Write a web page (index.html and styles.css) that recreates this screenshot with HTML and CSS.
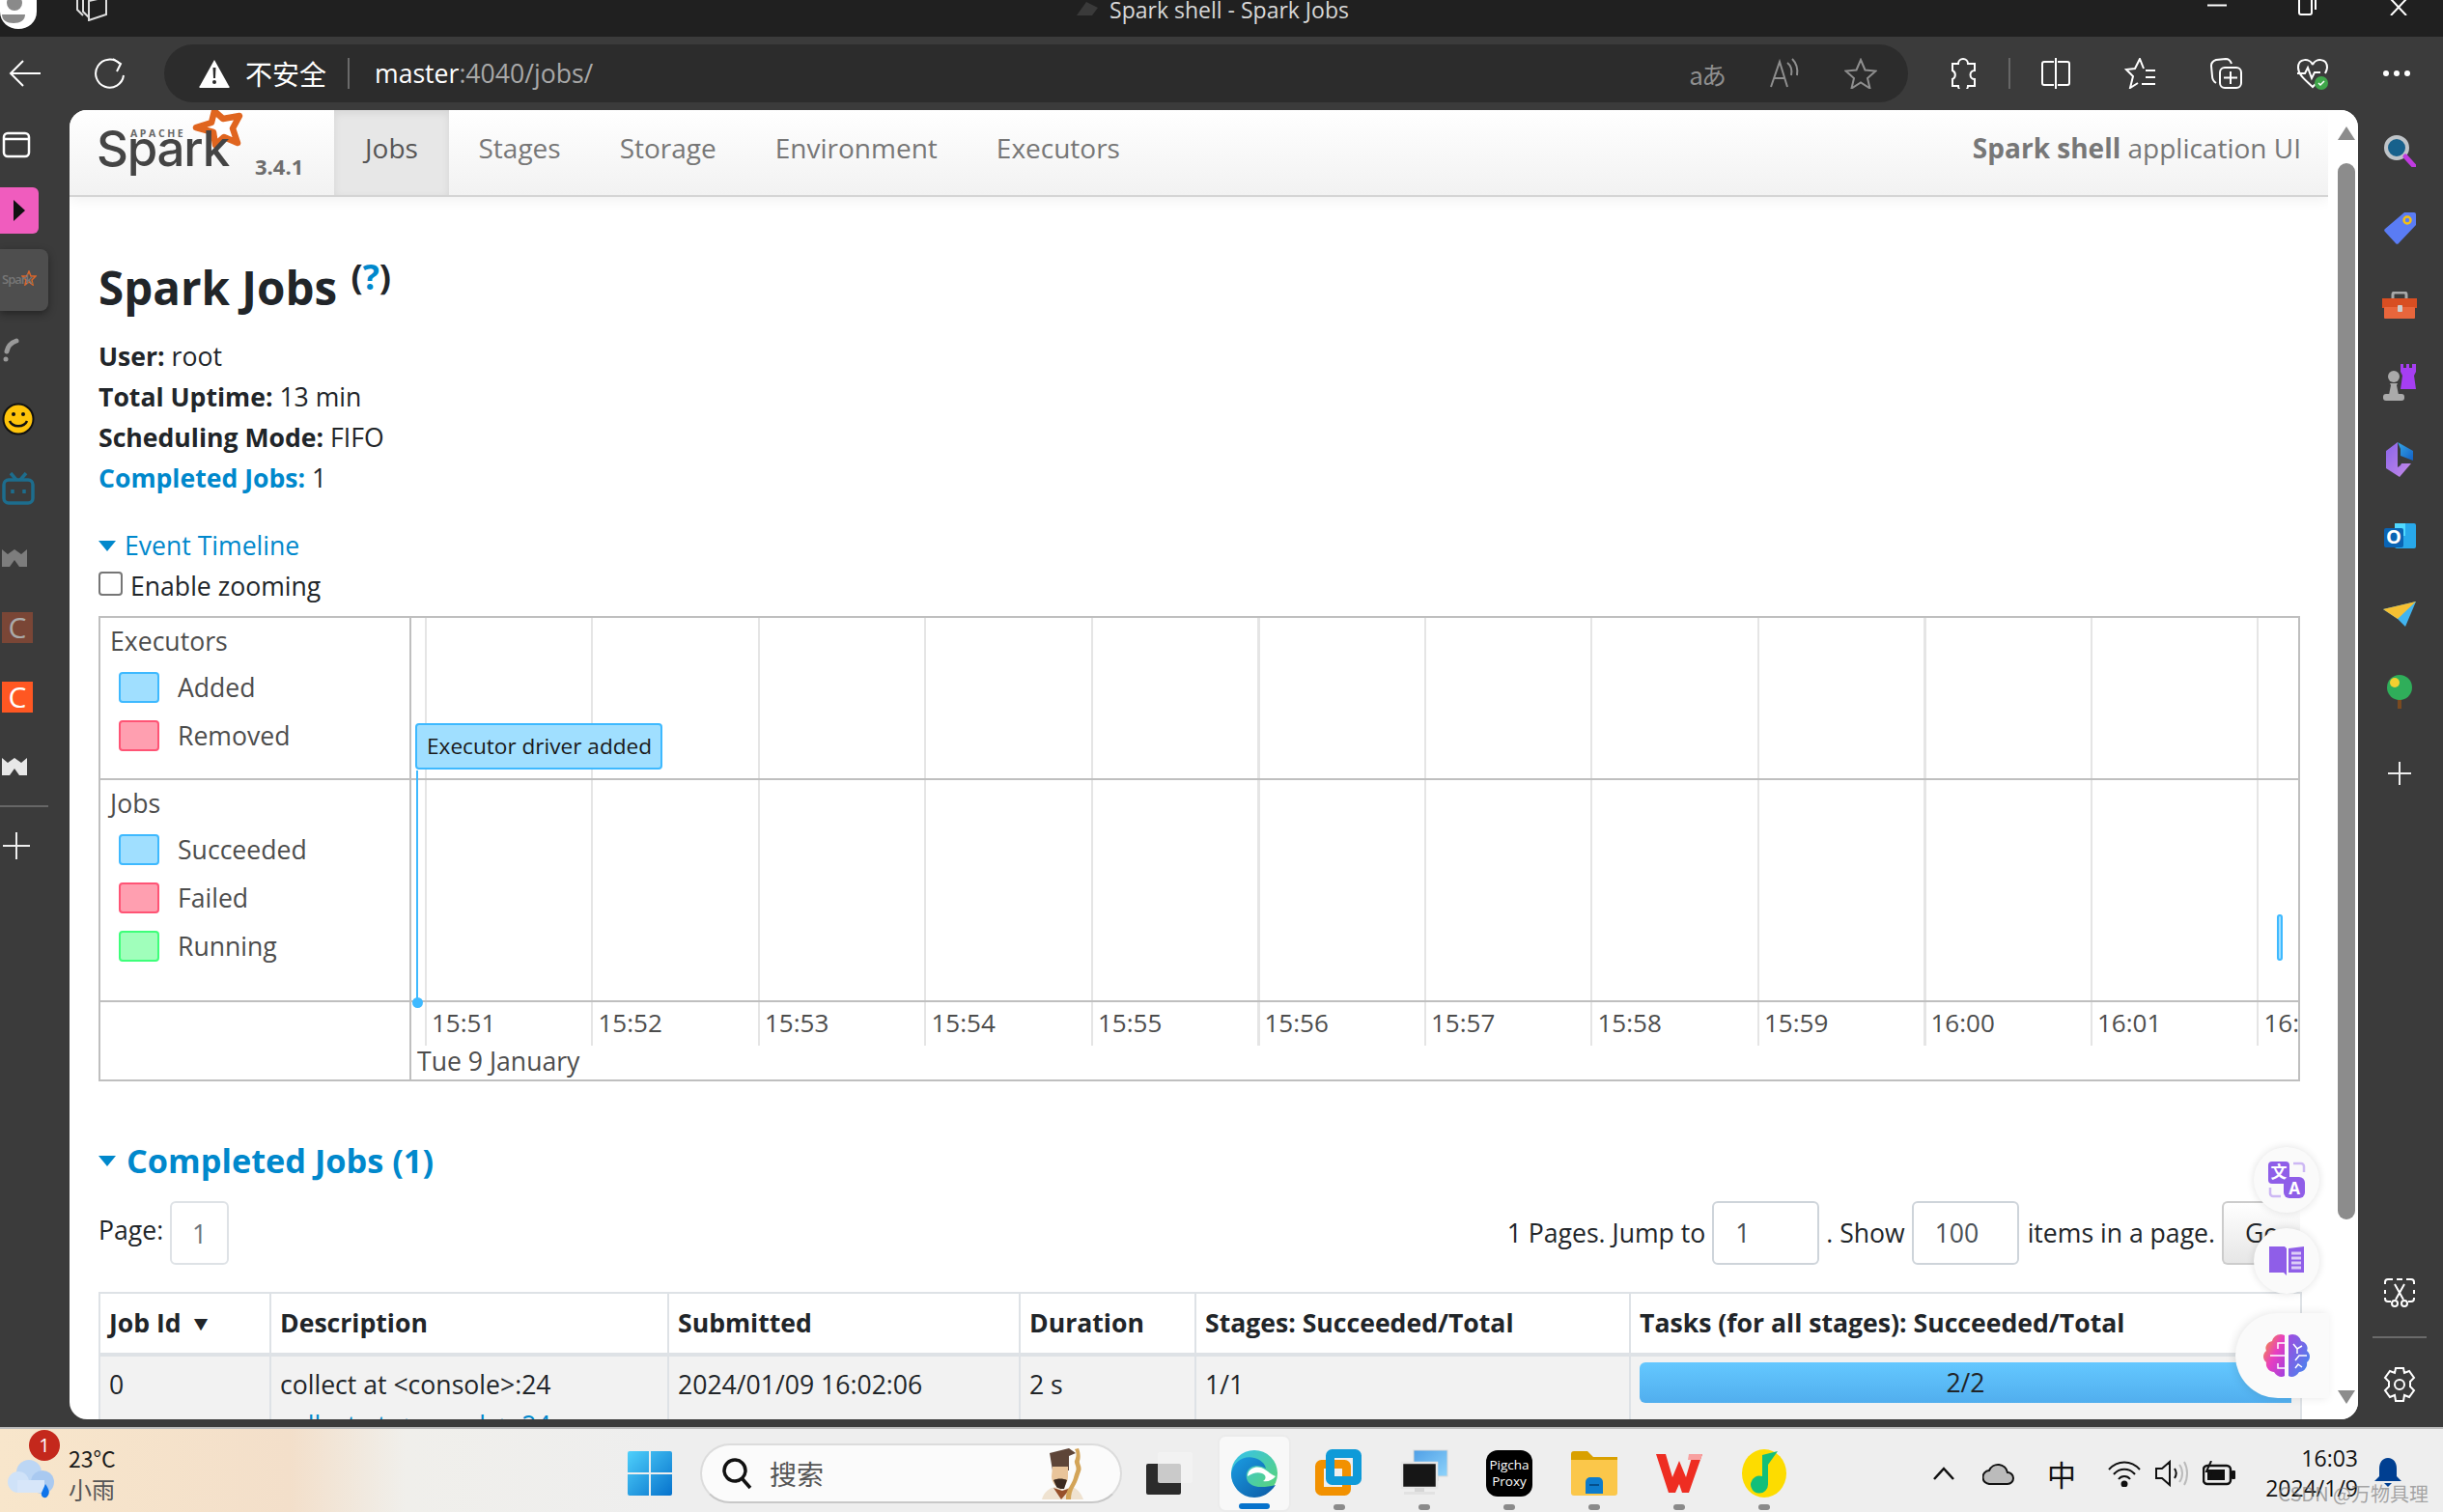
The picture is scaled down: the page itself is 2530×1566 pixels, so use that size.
FILE: index.html
```html
<!DOCTYPE html>
<html lang="zh-CN">
<head>
<meta charset="utf-8">
<title>Spark shell - Spark Jobs</title>
<link rel="stylesheet" href="styles.css">
</head>
<body>
<div class="desktop">
  <header class="titlebar">
    <div class="title-left">
      <svg width="38" height="30" viewBox="0 0 38 30"><path d="M0 0h38v12c0 11-9 18-19 18S0 23 0 12z" fill="#fff"/><circle cx="15" cy="3" r="8" fill="#8a8a8a"/><path d="M2 15h24c0 6-5 9-12 9S2 21 2 15z" fill="#8a8a8a"/></svg>
      <svg class="tabs-ico" width="34" height="24" viewBox="0 0 34 24" fill="none" stroke="#ddd" stroke-width="2"><path d="M2 0v12l6 6M8 0v14l6 6M14 3l18-4v18l-18 6z"/></svg>
    </div>
    <div class="title-text"><svg width="30" height="16" viewBox="0 0 30 16"><path d="M4 16L14 2l12 6-6 8z" fill="#3a3a3a"/></svg><span>Spark shell - Spark Jobs</span></div>
    <div class="win-controls">
      <svg width="20" height="14" viewBox="0 0 20 14"><path d="M0 5.500h20" stroke="#fff" stroke-width="2"/></svg>
      <svg width="20" height="16" viewBox="0 0 20 16" fill="none" stroke="#fff" stroke-width="2"><rect x="1" y="-4" width="13" height="19" rx="2"/><path d="M18 -2v12"/></svg>
      <svg width="20" height="16" viewBox="0 0 20 16" fill="none" stroke="#fff" stroke-width="2"><path d="M2 -1l16 17M18 -1L2 16"/></svg>
    </div>
  </header>

  <nav class="toolbar">
    <svg class="tb-back" width="34" height="28" viewBox="0 0 34 28" fill="none" stroke="#fff" stroke-width="2"><path d="M33 14H2M15 1L2 14l13 13"/></svg>
    <svg class="tb-reload" width="34" height="34" viewBox="0 0 34 34" fill="none" stroke="#fff" stroke-width="2"><path d="M27 7a14.500 14.500 0 1 0 4 12"/><path d="M20 2l8 5-4 8" /></svg>
    <div class="addressbar">
      <svg width="32" height="30" viewBox="0 0 32 30"><path d="M16 1l15 27a1 1 0 0 1-1 2H2a1 1 0 0 1-1-2z" fill="#fff"/><path d="M14.500 9h3l-.5 11h-2z" fill="#2c2c2c"/><circle cx="16" cy="24" r="2" fill="#2c2c2c"/></svg>
      <span class="insecure">不安全</span>
      <span class="addr-sep"></span>
      <span class="url"><b>master</b>:4040/jobs/</span>
      <span class="addr-icons">
        <span class="read-glyph">aあ</span>
        <svg width="32" height="32" viewBox="0 0 32 32" fill="none" stroke="#8f8f8f" stroke-width="2"><path d="M2 30L11 4l8 26M5 21h12M19 5c4 3 5 8 4 13M24 1c5 5 6 11 5 17"/></svg>
        <svg width="34" height="32" viewBox="0 0 34 32" fill="none" stroke="#8f8f8f" stroke-width="2"><path d="M17 2l4.500 10.500 11 1-8.500 7.500 2.500 10.500L17 25.500 7.500 31.500 10 21l-8.500-7.500 11-1z"/></svg>
      </span>
    </div>
    <div class="tb-icons">
      <svg width="30" height="32" viewBox="0 0 30 32" fill="none" stroke="#fff" stroke-width="2"><path d="M10 6a5 5 0 0 1 10 0h7v7a4.500 4.500 0 0 0 0 9v7h-7a5 5 0 0 1-10 0H4v-7a5 5 0 0 0 0-9V6z" transform="translate(-1 0)"/></svg>
      <span class="tb-sep"></span>
      <svg class="tb-split" width="32" height="32" viewBox="0 0 32 32" fill="none" stroke="#fff" stroke-width="2"><path d="M14 4H4a2 2 0 0 0-2 2v20a2 2 0 0 0 2 2h10M18 4h10a2 2 0 0 1 2 2v20a2 2 0 0 1-2 2H18M16 0v32"/></svg>
      <svg width="34" height="32" viewBox="0 0 34 32" fill="none" stroke="#fff" stroke-width="2"><path d="M20 11L16 1l-5 10-9 1 7 7-3 12 8-5M22 13h10M22 20h10M18 27h14"/></svg>
      <svg width="34" height="32" viewBox="0 0 34 32" fill="none" stroke="#fff" stroke-width="2"><path d="M6 26C3 24 2 22 2 19L1 8c0-3 2-5 5-6l10-1c3 0 5 2 6 5"/><rect x="10" y="10" width="22" height="21" rx="5"/><path d="M21 14v13M14 20.500h14"/></svg>
      <svg width="34" height="34" viewBox="0 0 34 34"><path d="M17 8C14 1 2 1 2 11c0 8 9 14 15 20 1-1 3-3 4-4M17 8c3-7 15-7 15 3 0 2-1 4-2 6" fill="none" stroke="#fff" stroke-width="2"/><path d="M1 17h8l3-6 4 11 3-6h6" fill="none" stroke="#fff" stroke-width="2"/><circle cx="26" cy="27" r="7" fill="#3fa64a"/><path d="M23 27l2 2 4-4" fill="none" stroke="#fff" stroke-width="1.500"/></svg>
      <svg width="30" height="8" viewBox="0 0 30 8" fill="#fff"><circle cx="4" cy="4" r="3"/><circle cx="15" cy="4" r="3"/><circle cx="26" cy="4" r="3"/></svg>
    </div>
  </nav>

  <div class="workspace">
    <aside class="side-left">
      <div class="sl-item sl-first"><svg width="30" height="28" viewBox="0 0 30 28" fill="none" stroke="#fff" stroke-width="2.500"><rect x="2" y="2" width="26" height="24" rx="4"/><path d="M2 8h26"/></svg></div>
      <div class="sl-item"><div class="pink-btn"><svg width="14" height="22" viewBox="0 0 14 22"><path d="M1 0l12 11L1 22z" fill="#111"/></svg></div></div>
      <div class="sl-item"><div class="spark-tab"><svg width="16" height="16" viewBox="0 0 16 16"><path d="M8 1l2 5 5 0-4 4 1 5-4-3-4 3 1-5-4-4 5 0z" fill="none" stroke="#d9662b" stroke-width="1.500"/></svg><span class="mini-spark">Spark</span></div></div>
      <div class="sl-item"><svg width="20" height="26" viewBox="0 0 20 26" fill="none" stroke="#999" stroke-width="5" stroke-linecap="round"><path d="M15 4C9 6 6 10 5 15"/><path d="M4 23v.1"/></svg></div>
      <div class="sl-item"><svg width="34" height="34" viewBox="0 0 34 34"><circle cx="17" cy="17" r="15.500" fill="#ffc40a" stroke="#111" stroke-width="2"/><circle cx="12" cy="12" r="2" fill="#111"/><circle cx="22" cy="12" r="2" fill="#111"/><path d="M8 19c3 7 15 7 18 0" fill="none" stroke="#111" stroke-width="2.500"/></svg></div>
      <div class="sl-item"><svg width="34" height="34" viewBox="0 0 34 34" fill="none" stroke="#1d6d8d" stroke-width="3.500"><rect x="2" y="8" width="30" height="24" rx="5"/><path d="M9 1l6 7M25 1l-6 7"/><path d="M11 18v4M23 18v4"/></svg></div>
      <div class="sl-item"><svg width="26" height="18" viewBox="0 0 26 18"><path d="M0 0l6 5 7-5 7 5 6-5v18h-8l-5-7-5 7H0z" fill="#7d7d7d"/></svg></div>
      <div class="sl-item"><div class="c-badge c-dim">C</div></div>
      <div class="sl-item"><div class="c-badge c-hot">C</div></div>
      <div class="sl-item"><svg width="26" height="18" viewBox="0 0 26 18"><path d="M0 0l6 5 7-5 7 5 6-5v18h-8l-5-7-5 7H0z" fill="#e8e8e8"/></svg></div>
      <div class="sl-divider"></div>
      <div class="sl-item"><svg width="30" height="30" viewBox="0 0 30 30" stroke="#eee" stroke-width="2"><path d="M15 1v28M1 15h28"/></svg></div>
    </aside>

    <main class="page">
      <div class="page-scroll">
        <div class="navbar">
          <div class="brand">
            <span class="spark-logo">
              <svg class="spark-star" width="70" height="50" viewBox="0 0 70 50"><path d="M32 5l9 8 17-3-7 13 5 15-14-6-9 8-2-13-18-5 16-5z" fill="#fff" stroke="#e0651f" stroke-width="6.500" stroke-linejoin="round"/></svg>
              <span class="apache">APACHE</span>
              <span class="spark-word">Spark</span>
            </span>
            <span class="version">3.4.1</span>
          </div>
          <a class="tab tab-active">Jobs</a>
          <a class="tab">Stages</a>
          <a class="tab">Storage</a>
          <a class="tab">Environment</a>
          <a class="tab">Executors</a>
          <span class="appname"><b>Spark shell</b> application UI</span>
        </div>

        <div class="content">
          <h3 class="heading">Spark Jobs <sup class="help">(<a>?</a>)</sup></h3>
          <ul class="info">
            <li><b>User:</b> root</li>
            <li><b>Total Uptime:</b> 13 min</li>
            <li><b>Scheduling Mode:</b> FIFO</li>
            <li><b class="link">Completed Jobs:</b> 1</li>
          </ul>
          <div class="collapse-line"><i class="tri"></i><a>Event Timeline</a></div>
          <label class="zoom-line"><span class="checkbox"></span>Enable zooming</label>

          <div class="timeline">
            <div class="legend legend-top">
              <div class="legend-title">Executors</div>
              <div class="legend-row"><i class="sw sw-blue"></i>Added</div>
              <div class="legend-row"><i class="sw sw-red"></i>Removed</div>
            </div>
            <div class="chart chart-top"><div class="event-box">Executor driver added</div></div>
            <div class="legend legend-jobs">
              <div class="legend-title">Jobs</div>
              <div class="legend-row"><i class="sw sw-blue"></i>Succeeded</div>
              <div class="legend-row"><i class="sw sw-red"></i>Failed</div>
              <div class="legend-row"><i class="sw sw-green"></i>Running</div>
            </div>
            <div class="chart chart-jobs"><div class="job-mark"></div></div>
            <div class="axis-left"></div>
            <div class="axis">
              <div class="ticks">
                <span>15:51</span><span>15:52</span><span>15:53</span><span>15:54</span><span>15:55</span><span>15:56</span><span>15:57</span><span>15:58</span><span>15:59</span><span>16:00</span><span>16:01</span><span>16:02</span>
              </div>
              <div class="axis-date">Tue 9 January</div>
            </div>
            <div class="event-line"></div>
            <div class="event-dot"></div>
          </div>

          <h4 class="section-title"><i class="tri tri-lg"></i><a>Completed Jobs (1)</a></h4>

          <div class="pager">
            <span class="pg-label">Page:</span>
            <span class="pg-num">1</span>
            <span class="pg-right">1 Pages. Jump to</span>
            <span class="pg-input pg-jump">1</span>
            <span>. Show</span>
            <span class="pg-input pg-show">100</span>
            <span>items in a page.</span>
            <span class="pg-go">Go</span>
          </div>

          <table class="jobs">
            <colgroup><col class="c1"><col class="c2"><col class="c3"><col class="c4"><col class="c5"><col class="c6"></colgroup>
            <thead>
              <tr><th>Job Id <span class="sort">▼</span></th><th>Description</th><th>Submitted</th><th>Duration</th><th>Stages: Succeeded/Total</th><th>Tasks (for all stages): Succeeded/Total</th></tr>
            </thead>
            <tbody>
              <tr>
                <td>0</td>
                <td>collect at &lt;console&gt;:24<div class="sublink">collect at &lt;console&gt;:24</div></td>
                <td>2024/01/09 16:02:06</td>
                <td>2 s</td>
                <td>1/1</td>
                <td><div class="progress">2/2</div></td>
              </tr>
            </tbody>
          </table>
        </div>
      </div>
      <div class="scrollbar">
        <i class="sb-up"></i>
        <i class="sb-thumb"></i>
        <i class="sb-down"></i>
      </div>

      <div class="float-btn float-translate"><svg width="40" height="40" viewBox="0 0 40 40"><rect x="1" y="1" width="22" height="23" rx="4" fill="#8f5ee8"/><text class="fb-cn" x="12" y="18">文</text><path d="M27 3h8a3 3 0 0 1 3 3v6M3 28v6a3 3 0 0 0 3 3h8" fill="none" stroke="#cdb8f4" stroke-width="2.500"/><rect x="17" y="17" width="22" height="22" rx="6" fill="#8f5ee8"/><text class="fb-en" x="28" y="35">A</text></svg></div>
      <div class="float-btn float-book"><svg width="36" height="32" viewBox="0 0 36 32"><path d="M0 1h16l2 2v28l-3-3H0z" fill="#8f5ee8"/><path d="M20 3l16-2v27H20z" fill="#8f5ee8"/><path d="M23 8h10M23 13h10M23 18h10M23 23h10" stroke="#dccdf7" stroke-width="3"/></svg></div>
      <div class="float-brain"><svg width="50" height="46" viewBox="0 0 50 46"><defs><linearGradient id="brainL" x1="0" y1="0" x2="1" y2="1"><stop offset="0" stop-color="#f59a2e"/><stop offset=".5" stop-color="#e83fc0"/><stop offset="1" stop-color="#a040e0"/></linearGradient><linearGradient id="brainR" x1="0" y1="0" x2="1" y2="1"><stop offset="0" stop-color="#a04be0"/><stop offset="1" stop-color="#3d8cf0"/></linearGradient></defs><path d="M23 2c-6-3-12 1-13 6-5 1-8 6-6 10-4 3-4 9 0 12-1 5 3 10 8 10 3 5 8 6 11 4z" fill="url(#brainL)"/><path d="M27 2c6-3 12 1 13 6 5 1 8 6 6 10 4 3 4 9 0 12 1 5-3 10-8 10-3 5-8 6-11 4z" fill="url(#brainR)"/><path d="M8 23h15M23 10h-7v6M23 36h-7v-5M32 11l4 5 5-3M36 16v5M46 23h-8l-4 5M34 36l3-4 4 3" fill="none" stroke="#fff" stroke-width="1.500"/></svg></div>
    </main>

    <aside class="side-right">
      <div class="sr-item"><svg width="34" height="34" viewBox="0 0 34 34"><circle cx="14" cy="14" r="11" fill="#17618c" stroke="#bfc4c8" stroke-width="4"/><path d="M23 23l9 10" stroke="#c03be0" stroke-width="5" stroke-linecap="round"/></svg></div>
      <div class="sr-item"><svg width="34" height="34" viewBox="0 0 34 34"><path d="M22 1h10a2 2 0 0 1 2 2v11L16 33a2 2 0 0 1-3 0L2 21a2 2 0 0 1 0-3z" fill="#5a7cf4"/><circle cx="25" cy="9" r="3.500" fill="#5a7cf4" stroke="#f5c012" stroke-width="2.500"/></svg></div>
      <div class="sr-item"><svg width="36" height="28" viewBox="0 0 36 28"><path d="M11 7V3a2 2 0 0 1 2-2h10a2 2 0 0 1 2 2v4" fill="none" stroke="#a8a8a8" stroke-width="3"/><rect y="7" width="36" height="10" fill="#d84e22"/><rect x="2" y="16" width="32" height="12" rx="1" fill="#e8663c"/><rect x="16" y="14" width="5" height="7" rx="1" fill="#ccc"/></svg></div>
      <div class="sr-item"><svg width="36" height="38" viewBox="0 0 36 38"><path d="M19 0h3v4h3V0h3v4h3V0h4v8l-2 4 2 14h-16l2-14-2-4z" fill="#a63ef2"/><circle cx="12" cy="13" r="6" fill="#aaa"/><path d="M8 20h8l-1 2 2 10H7l2-10z" fill="#aaa"/><rect x="1" y="31" width="22" height="7" rx="3" fill="#aaa"/></svg></div>
      <div class="sr-item"><svg width="32" height="36" viewBox="0 0 32 36"><defs><linearGradient id="cpA" x1="0" y1="0" x2="1" y2="1"><stop offset="0" stop-color="#35a8e8"/><stop offset="1" stop-color="#1360c4"/></linearGradient><linearGradient id="cpB" x1="0" y1="0" x2="1" y2="1"><stop offset="0" stop-color="#8a64e8"/><stop offset="1" stop-color="#c58ae8"/></linearGradient></defs><path d="M14 0l16 9v10L17 14V7z" fill="url(#cpA)"/><path d="M2 9l12-9v22l14 0-12 14L2 27z" fill="url(#cpB)"/><path d="M14 14c6 2 6 9 0 12z" fill="#3b3b3b"/></svg></div>
      <div class="sr-item"><svg width="34" height="32" viewBox="0 0 34 32"><rect x="12" y="2" width="22" height="26" rx="2" fill="#28a8ea"/><rect x="12" y="2" width="11" height="13" fill="#50d9ff"/><rect x="1" y="7" width="20" height="20" rx="2" fill="#0a64b4"/><text class="ol-o" x="11" y="23">O</text></svg></div>
      <div class="sr-item"><svg width="34" height="26" viewBox="0 0 34 26"><path d="M0 8L34 0 23 26l-8-8z" fill="#41b4f0"/><path d="M0 8l15 10L34 0z" fill="#f5c033"/></svg></div>
      <div class="sr-item"><svg width="30" height="36" viewBox="0 0 30 36"><path d="M13 20v16h4V20" fill="#7a4a20"/><circle cx="15" cy="14" r="13" fill="#2fae5a"/><circle cx="10" cy="9" r="5" fill="#f2d030"/></svg></div>
      <div class="sr-item sr-plus"><svg width="26" height="26" viewBox="0 0 26 26" stroke="#eee" stroke-width="2"><path d="M13 1v24M1 13h24"/></svg></div>
      <div class="sr-bottom">
        <svg width="32" height="30" viewBox="0 0 32 30" fill="none" stroke="#fff" stroke-width="2"><path d="M9 1H4a3 3 0 0 0-3 3v2M23 1h5a3 3 0 0 1 3 3v2M1 12v4M31 12v4M1 20v1a3 3 0 0 0 3 3h3M31 20v1a3 3 0 0 1-3 3h-3M13 1h6" /><path d="M11 6l9 16M21 6l-9 16"/><circle cx="11" cy="26" r="3"/><circle cx="21" cy="26" r="3"/></svg>
        <span class="sr-div"></span>
        <svg width="34" height="36" viewBox="0 0 34 36" fill="none" stroke="#fff" stroke-width="2"><path d="M13 1h8l1 5 5-2 5 7-4 4v5l4 4-5 7-5-2-1 6h-8l-1-6-5 2-5-7 4-4v-5L2 11l5-7 5 2z"/><circle cx="17" cy="18" r="5"/></svg>
      </div>
    </aside>
  </div>

  <footer class="taskbar">
    <div class="weather">
      <div class="weather-ico">
        <svg width="50" height="44" viewBox="0 0 50 44"><circle cx="22" cy="16" r="13" fill="#bcd6f4"/><circle cx="11" cy="26" r="11" fill="#cfe2f8"/><circle cx="36" cy="26" r="12" fill="#a9c9f0"/><rect x="10" y="24" width="28" height="13" fill="#d7e6f9"/><path d="M39 28c4 6 5 9 2 13-3 3-7 0-6-4z" fill="#0f74ea"/></svg>
        <span class="badge">1</span>
      </div>
      <div class="weather-text"><span>23°C</span><span class="w-cn">小雨</span></div>
    </div>
    <div class="winlogo"><svg width="46" height="46" viewBox="0 0 46 46"><defs><linearGradient id="wl" x1="0" y1="0" x2="1" y2="1"><stop offset="0" stop-color="#4fd0fb"/><stop offset="1" stop-color="#0672cc"/></linearGradient></defs><path d="M0 2a2 2 0 0 1 2-2h20v22H0zM24 0h20a2 2 0 0 1 2 2v20H24zM0 24h22v22H2a2 2 0 0 1-2-2zM24 24h22v20a2 2 0 0 1-2 2H24z" fill="url(#wl)"/></svg></div>
    <div class="searchbox">
      <svg width="32" height="34" viewBox="0 0 32 34" fill="none" stroke="#111" stroke-width="3.500"><circle cx="14" cy="14" r="11"/><path d="M22 23l8 9"/></svg>
      <span class="search-txt">搜索</span>
      <svg class="sage" width="50" height="54" viewBox="0 0 50 54"><path d="M10 6l20-5 7 5-7 3 0 15H13z" fill="#5e4538"/><path d="M13 20h16v10c0 7-4 12-8 12s-9-5-9-12z" fill="#e9c49a"/><path d="M14 34c4-2 10-2 14 0l-3 9h-7z" fill="#3b2a20"/><path d="M2 54c2-8 8-12 14-13l8 3 8-3c6 1 10 5 13 13z" fill="#efe2d0"/><path d="M14 42l8 12 10-12-9 3z" fill="#97502a"/><path d="M36 2c3 5 1 9 0 12s3 6 1 11-2 9-6 15-4 10-4 14h5c0-5 1-9 4-14s4-10 6-15-2-8-1-11 1-8-1-13z" fill="#d3a458"/></svg>
    </div>
    <div class="task-apps">
      <div class="task-item"><svg width="50" height="44" viewBox="0 0 50 44"><rect x="1" y="12" width="36" height="32" rx="2" fill="#2b2b2b"/><rect x="13" y="0" width="36" height="32" rx="2" fill="#f2f2f2" fill-opacity=".8"/></svg></div>
      <div class="task-item task-active"><svg width="48" height="50" viewBox="0 0 48 50"><defs><linearGradient id="edA" x1="0" y1="0" x2="1" y2="1"><stop offset="0" stop-color="#35c1f1"/><stop offset="1" stop-color="#5dd66b"/></linearGradient><linearGradient id="edB" x1="0" y1="0" x2="1" y2="1"><stop offset="0" stop-color="#1b9de2"/><stop offset="1" stop-color="#0c59a4"/></linearGradient></defs><circle cx="24" cy="25" r="24" fill="url(#edA)"/><path d="M0 25C2 14 12 6 24 9c7 2 11 6 12 11-8-5-18-3-20 5-2 10 7 18 30 12-6 9-14 13-22 13C10 50 0 38 0 25z" fill="url(#edB)"/><path d="M17 28c0-7 7-11 14-9 6 2 9 7 15 9-3 4-8 6-13 5 4-2 3-7-1-8-5-2-10 0-15 3z" fill="#fff"/></svg></div>
      <div class="task-item"><svg width="50" height="50" viewBox="0 0 50 50" fill="none" stroke-width="9"><rect x="4.500" y="15.500" width="28" height="28" rx="2" stroke="#f29100"/><rect x="15.500" y="4.500" width="28" height="28" rx="2" stroke="#0f9ad8"/></svg></div>
      <div class="task-item"><svg width="50" height="50" viewBox="0 0 50 50"><defs><linearGradient id="mon" x1="0" y1="0" x2="1" y2="1"><stop offset="0" stop-color="#4f9fe6"/><stop offset="1" stop-color="#8fd4fb"/></linearGradient></defs><rect x="14" y="1" width="35" height="27" fill="url(#mon)" stroke="#d8d8d8"/><path d="M26 28h14v5H26z" fill="#ddd"/><rect x="2" y="14" width="36" height="26" fill="#161616" stroke="#e6e6e6" stroke-width="2.500"/><path d="M15 40h10v4H15z" fill="#d6d6d6"/><path d="M4 44h32v3H4z" fill="#e2e2e2"/></svg></div>
      <div class="task-item"><div class="pigcha"><span>Pigcha</span><span>Proxy</span></div></div>
      <div class="task-item"><svg width="48" height="46" viewBox="0 0 48 46"><path d="M0 3a3 3 0 0 1 3-3h14l6 6h25v6H0z" fill="#d9a000"/><path d="M0 9h48v34a3 3 0 0 1-3 3H3a3 3 0 0 1-3-3z" fill="#fbc74a"/><path d="M15 44V32a5 5 0 0 1 5-5h8a5 5 0 0 1 5 5v12z" fill="#0d7ccc"/><path d="M19 35h10" stroke="#044f8c" stroke-width="2"/></svg></div>
      <div class="task-item"><svg width="48" height="40" viewBox="0 0 48 40"><path d="M0 0h10l7 24L24 7l7 17 7-24h10L34 40h-7l-3-9-4 9h-7z" fill="#ee2d22"/><path d="M34 0h14l-2 6H33z" fill="#f8a0a0"/></svg></div>
      <div class="task-item"><svg width="48" height="50" viewBox="0 0 48 50"><ellipse cx="24" cy="25" rx="23" ry="25" fill="#fddc00"/><path d="M22 6l16-4-10 14v20a9 9 0 1 1-6-8z" fill="#12bf7a"/></svg></div>
    </div>
    <div class="tray">
      <svg width="22" height="14" viewBox="0 0 22 14" fill="none" stroke="#111" stroke-width="2.500"><path d="M1 13L11 2l10 11"/></svg>
      <svg class="tr-cloud" width="34" height="24" viewBox="0 0 34 24"><path d="M8 23a7 7 0 0 1-1-14 10 10 0 0 1 19 2 6 6 0 0 1 0 12z" fill="#bbb" stroke="#111" stroke-width="2"/></svg>
      <span class="ime">中</span>
      <svg width="34" height="28" viewBox="0 0 34 28" fill="none" stroke="#111" stroke-width="2"><path d="M1 10c9-10 23-10 32 0M6 15c6-7 16-7 22 0M11 20c3-4 9-4 12 0"/><circle cx="17" cy="25" r="2.500" fill="#111"/></svg>
      <svg width="34" height="28" viewBox="0 0 34 28" fill="none" stroke="#111" stroke-width="2"><path d="M1 9h6l8-7v24l-8-7H1zM20 9c2 3 2 7 0 10"/><path d="M25 5c4 5 4 13 0 18M30 2c4 7 4 17 0 24" stroke="#bbb"/></svg>
      <svg width="34" height="26" viewBox="0 0 34 26"><rect x="1" y="5" width="28" height="19" rx="4" fill="none" stroke="#111" stroke-width="2.500"/><rect x="5" y="9" width="18" height="11" fill="#111"/><rect x="30" y="10" width="4" height="9" rx="1" fill="#111"/><path d="M9 0L4 11h5l-2 8" fill="none" stroke="#111" stroke-width="2"/></svg>
      <div class="clock"><span>16:03</span><span>2024/1/9</span></div>
      <svg class="bell" width="28" height="30" viewBox="0 0 28 30"><path d="M14 0c6 0 9 5 9 11v8l5 5H0l5-5v-8C5 5 8 0 14 0z" fill="#003f91"/><path d="M10 26h8l-4 4z" fill="#003f91"/></svg>
    </div>
    <span class="watermark">CSDN @万物具理</span>
  </footer>
</div>
</body>
</html>
```
FILE: styles.css
```css
* { box-sizing: border-box; }
html, body { margin: 0; padding: 0; height: 100%; overflow: hidden; }
body { font-family: "Open Sans", "Noto Sans CJK SC", sans-serif; font-size: 26.600px; color: #212529; background: #202020; }
a { color: inherit; text-decoration: none; }
b { font-weight: 700; }

.desktop { width: 2530px; height: 1566px; display: grid; grid-template-rows: 38px 76px 1364px 88px; position: relative; overflow: hidden; }

/* title bar */
.titlebar { background: #202020; display: grid; grid-template-columns: 1fr auto 1fr; overflow: hidden; }
.title-left { display: flex; align-items: flex-start; gap: 40px; }
.tabs-ico { margin-top: -2px; }
.title-text { display: flex; align-items: flex-start; gap: 8px; color: #d8d8d8; font-size: 23px; line-height: 20px; margin-right: 22px; }
.win-controls { display: flex; justify-content: flex-end; align-items: flex-start; gap: 74px; padding-right: 36px; }

/* toolbar */
.toolbar { background: #3b3b3b; display: flex; align-items: center; padding-left: 9px; }
.tb-reload { margin-left: 54px; }
.addressbar { margin-left: 39px; width: 1806px; height: 60px; background: #2c2c2c; border-radius: 30px; display: flex; align-items: center; padding-left: 36px; color: #fff; }
.insecure { margin-left: 16px; font-family: "Noto Sans CJK SC", sans-serif; font-size: 28px; }
.addr-sep { width: 2px; height: 32px; background: #6a6a6a; margin: 0 26px 0 22px; }
.url { color: #a8a8a8; font-size: 26.600px; }
.url b { color: #fff; font-weight: 400; }
.addr-icons { margin-left: auto; display: flex; align-items: center; gap: 46px; padding-right: 32px; }
.read-glyph { color: #8f8f8f; font-family: "Noto Sans CJK SC", sans-serif; font-size: 26px; letter-spacing: -2px; }
.tb-icons { margin-left: 43px; display: flex; align-items: center; gap: 55px; }
.tb-sep { width: 2px; height: 32px; background: #666; margin: 0 -24px; }

/* workspace */
.workspace { background: #3b3b3b; display: grid; grid-template-columns: 72px 2370px 88px; overflow: hidden; }
.side-left { display: flex; flex-direction: column; align-items: flex-start; padding-top: 4px; }
.sl-item { height: 72px; display: flex; align-items: center; padding-left: 2px; width: 100%; }
.sl-first { height: 64px; }
.sl-divider { width: 50px; height: 2px; background: #666; margin-top: 4px; margin-bottom: 4px; }
.pink-btn { width: 40px; height: 48px; margin-left: -2px; background: #f05cbe; border-radius: 0 6px 6px 0; display: flex; align-items: center; justify-content: center; }
.spark-tab { width: 50px; height: 64px; margin-left: -2px; background: #4e4e4e; border-radius: 0 8px 8px 0; box-shadow: 0 3px 8px rgba(0,0,0,.4); position: relative; padding: 10px 0 0 22px; }
.mini-spark { position: absolute; left: 2px; top: 22px; font-size: 13px; color: #777; font-weight: 600; letter-spacing: -1px; }
.c-badge { width: 32px; height: 32px; font-size: 30px; line-height: 31px; text-align: center; }
.c-dim { background: #7a4636; color: #aaa; }
.c-hot { background: #ff5722; color: #fff; }

.page { position: relative; background: #fff; border-radius: 18px; overflow: hidden; height: 1356px; display: flex; }
.page-scroll { width: 2339px; height: 100%; overflow: hidden; }
.scrollbar { width: 31px; position: relative; display: flex; flex-direction: column; align-items: center; background: #fff; padding: 17px 0 0 7px; }
.sb-up { width: 0; height: 0; border-left: 9px solid transparent; border-right: 9px solid transparent; border-bottom: 14px solid #8c8c8c; }
.sb-thumb { width: 18px; height: 1094px; margin-top: 24px; background: #8c8c8c; border-radius: 9px; }
.sb-down { width: 0; height: 0; border-left: 9px solid transparent; border-right: 9px solid transparent; border-top: 14px solid #8c8c8c; margin-top: auto; margin-bottom: 16px; }

/* navbar */
.navbar { height: 90px; display: flex; align-items: stretch; background: linear-gradient(#fff, #f2f2f2); border-bottom: 2px solid #d4d4d4; box-shadow: 0 2px 14px rgba(0,0,0,.07); color: #777; }
.brand { width: 274px; position: relative; display: flex; padding-left: 28px; overflow: hidden; }
.spark-logo { position: relative; width: 170px; height: 88px; display: block; }
.spark-star { position: absolute; left: 90px; top: -4px; }
.apache { position: absolute; left: 35px; top: 18px; font-size: 10.500px; font-weight: 700; letter-spacing: 2.600px; color: #666; line-height: 12px; }
.spark-word { position: absolute; left: 0; top: 8px; font-size: 51px; line-height: 64px; font-weight: 500; letter-spacing: -1.200px; color: #444; font-family: Inter, sans-serif; }
.version { position: absolute; left: 192px; top: 45px; font-size: 22px; font-weight: 700; color: #6d6d6d; line-height: 26px; }
.tab { padding: 0 30.500px; font-size: 28px; line-height: 78px; }
.tab-active { background: #e7e7e7; box-shadow: inset 0 3px 9px rgba(0,0,0,.08); color: #555; width: 119px; text-align: center; padding: 0; }
.appname { margin-left: auto; padding-right: 28px; font-size: 28px; line-height: 78px; }
.appname b { font-weight: 700; }

/* content */
.content { padding: 0 30px; }
.heading { margin: 64px 0 20px; font-size: 47.500px; line-height: 60px; font-weight: 700; color: #212529; }
.help { font-size: 36px; line-height: 0; vertical-align: 16px; margin-left: 2px; font-weight: 700; }
.help a { color: #0088cc; }
.info { list-style: none; margin: 0; padding: 0; line-height: 42px; }
.link { color: #0088cc; }
.collapse-line { margin-top: 28px; line-height: 42px; display: flex; align-items: center; color: #0088cc; }
.tri { width: 0; height: 0; border-left: 9.500px solid transparent; border-right: 9.500px solid transparent; border-top: 11px solid #0088cc; margin-right: 9px; }
.zoom-line { line-height: 42px; display: flex; align-items: center; }
.checkbox { width: 25px; height: 25px; border: 2px solid #767676; border-radius: 4px; background: #fff; margin-right: 8px; margin-top: -5px; }

/* timeline */
.timeline { --grid: repeating-linear-gradient(90deg, #e5e5e5 14px 16px, transparent 16px 186.500px); margin-top: 10px; width: 2280px; height: 482px; border: 2px solid #bfbfbf; display: grid; grid-template-columns: 322px 1fr; grid-template-rows: 168px 230px 1fr; position: relative; color: #4d4d4d; }
.legend { padding: 4px 0 0 10px; border-right: 2px solid #bfbfbf; border-bottom: 2px solid #bfbfbf; }
.legend-title { line-height: 40px; margin-bottom: 3px; }
.legend-row { height: 50px; display: flex; align-items: center; padding-left: 9px; }
.sw { width: 42px; height: 32px; border-radius: 4px; border: 2px solid; margin-right: 19px; }
.sw-blue { background: #a0dfff; border-color: #3eb9ff; }
.sw-red { background: #ff9fb0; border-color: #ff5475; }
.sw-green { background: #a0ffbb; border-color: #3eff7a; }
.chart { position: relative; background: var(--grid); border-bottom: 2px solid #bfbfbf; }
.event-box { position: absolute; left: 4px; top: 109px; width: 256px; height: 48px; background: #a0dfff; border: 2px solid #3eb9ff; border-radius: 4px; color: #1a1a1a; font-size: 22.600px; line-height: 44px; padding-left: 10px; white-space: nowrap; }
.job-mark { position: absolute; left: 1932px; top: 139px; width: 6px; height: 48px; background: #a0dfff; border: 2px solid #3eb9ff; border-radius: 3px; }
.axis-left { border-right: 2px solid #bfbfbf; }
.axis { overflow: hidden; }
.ticks { height: 45px; display: flex; background: var(--grid); padding-left: 14px; font-size: 26px; }
.ticks span { flex: 0 0 172.500px; padding-left: 7px; line-height: 42px; }
.axis-date { padding-left: 6px; line-height: 32px; }
.event-line { position: absolute; left: 327px; top: 158px; width: 2px; height: 240px; background: #3eb9ff; }
.event-dot { position: absolute; left: 323px; top: 393px; width: 11px; height: 11px; border-radius: 50%; background: #3eb9ff; }

/* section */
.section-title { margin: 57px 0 0; font-size: 34.300px; line-height: 50px; font-weight: 700; color: #0088cc; display: flex; align-items: center; }
.tri-lg { margin-right: 11px; }

.pager { margin-top: 17px; height: 66px; width: 2280px; display: flex; align-items: center; }
.pg-label { margin-top: -6px; }
.pg-num { width: 61px; height: 66px; margin-left: 7px; border: 2px solid #dee2e6; border-radius: 6px; text-align: center; line-height: 64px; color: #6c757d; }
.pg-right { margin-left: auto; }
.pg-input { height: 66px; border: 2px solid #ced4da; border-radius: 6px; line-height: 62px; padding-left: 22px; color: #495057; margin: 0 7px; }
.pg-jump { width: 111px; }
.pg-show { width: 111px; margin-right: 9px; }
.pg-go { width: 81px; height: 66px; margin-left: 7px; border: 2px solid #ccc; border-radius: 6px 0 0 6px; border-right: 0; line-height: 62px; padding-left: 22px; background: linear-gradient(#fff, #e6e6e6); overflow: hidden; }

/* table */
.jobs { margin-top: 28px; width: 2280px; table-layout: fixed; border-collapse: collapse; }
.c1 { width: 177px; } .c2 { width: 412px; } .c3 { width: 364px; } .c4 { width: 182px; } .c5 { width: 450px; } .c6 { width: 695px; }
.jobs th, .jobs td { border: 2px solid #dee2e6; padding: 10px 9px; text-align: left; vertical-align: top; line-height: 40px; }
.jobs th { height: 62px; font-weight: 700; border-bottom-width: 4px; }
.jobs td { background: #f2f2f2; padding-top: 9px; padding-bottom: 12px; }
.sort { font-size: 15px; vertical-align: 3px; margin-left: 6px; }
.sublink { color: #0088cc; margin-top: 2px; }
.progress { height: 42px; margin-top: -3px; text-align: center; line-height: 42px; border-radius: 6px 0 0 6px; background: linear-gradient(#64c8ff, #51aeee); }

/* floats */
.float-btn { position: absolute; width: 68px; height: 68px; border-radius: 50%; background: #fafafa; box-shadow: 0 0 8px rgba(0,0,0,.12); display: flex; align-items: center; justify-content: center; left: 2262px; }
.float-translate { top: 1074px; }
.float-book { top: 1158px; }
.fb-cn { font-family: "Noto Sans CJK SC", sans-serif; font-size: 17px; fill: #fff; text-anchor: middle; font-weight: 700; }
.fb-en { font-size: 17px; fill: #fff; font-weight: 700; text-anchor: middle; }
.float-brain { position: absolute; left: 2243px; top: 1246px; width: 97px; height: 88px; background: #fafafa; border-radius: 44px 0 0 44px; box-shadow: -2px 0 10px rgba(0,0,0,.1); display: flex; align-items: center; padding-left: 28px; }
.ol-o { font-size: 20px; font-weight: 700; fill: #fff; text-anchor: middle; }

/* right sidebar */
.side-right { display: flex; flex-direction: column; align-items: center; padding: 5px 2px 0 0; height: 1364px; }
.sr-item { height: 80px; display: flex; align-items: center; justify-content: center; flex: none; }
.sr-item:first-child { margin-top: -3px; }
.sr-plus { margin-top: 5px; }
.sr-bottom { margin-top: auto; display: flex; flex-direction: column; align-items: center; gap: 30px; padding-bottom: 26px; }
.sr-div { width: 56px; height: 2px; background: #6a6a6a; }

/* taskbar */
.taskbar { background: linear-gradient(90deg, #f8e6cb 0, #f3dfca 300px, #f0efeb 420px, #eeeeee 700px); border-top: 2px solid #bdbdbd; display: flex; align-items: center; position: relative; padding-top: 6px; }
.weather { width: 650px; display: flex; align-items: center; padding-left: 8px; flex: none; }
.weather-ico { position: relative; width: 50px; height: 44px; margin-top: 10px; }
.badge { position: absolute; left: 22px; top: -28px; width: 32px; height: 32px; border-radius: 50%; background: #c4281c; color: #fff; text-align: center; font-size: 20px; line-height: 32px; }
.weather-text { margin-left: 13px; display: flex; flex-direction: column; font-size: 23px; line-height: 31px; color: #1a1a1a; font-family: "Noto Sans CJK SC", "Open Sans", sans-serif; }
.w-cn { color: #555; font-size: 24px; }
.winlogo { width: 46px; height: 46px; flex: none; }
.searchbox { width: 437px; height: 62px; margin-left: 29px; border-radius: 31px; background: #fbfbfb; border: 2px solid #dcdcdc; border-bottom-color: #c8c8c8; display: flex; align-items: center; padding-left: 20px; flex: none; }
.search-txt { margin-left: 18px; font-family: "Noto Sans CJK SC", sans-serif; font-size: 28px; color: #555; }
.sage { margin-left: auto; margin-right: 33px; }
.task-apps { display: flex; margin-left: 5px; flex: none; }
.task-item { width: 88px; height: 80px; display: flex; align-items: center; justify-content: center; position: relative; }
.task-item::after { content: ""; position: absolute; left: 38px; bottom: 2px; width: 12px; height: 6px; border-radius: 3px; background: #8a8a8a; }
.task-item:first-child::after { display: none; }
.task-active { background: #f8f8f8; border: 2px solid #ebebeb; border-radius: 8px; width: 76px; margin: 0 6px; }
.task-active::after { left: 20px; width: 32px; background: #0672cc; bottom: 1px; }
.pigcha { width: 48px; height: 48px; background: #000; border-radius: 12px; color: #fff; font-size: 13.500px; line-height: 17px; display: flex; flex-direction: column; align-items: center; justify-content: center; }
.tray { margin-left: auto; display: flex; align-items: center; gap: 15px; padding-right: 43px; position: relative; }
.tr-cloud { margin-left: 14px; }
.ime { font-family: "Noto Sans CJK SC", sans-serif; font-size: 30px; margin: 0 18px; color: #111; }
.clock { width: 100px; margin-left: 12px; display: flex; flex-direction: column; align-items: flex-end; font-size: 23px; line-height: 31px; color: #111; }
.bell { margin-left: 2px; margin-top: -2px; }
.watermark { position: absolute; right: 15px; bottom: 5px; font-family: "Noto Sans CJK SC", sans-serif; font-size: 20px; color: rgba(120,120,120,.65); }
```
